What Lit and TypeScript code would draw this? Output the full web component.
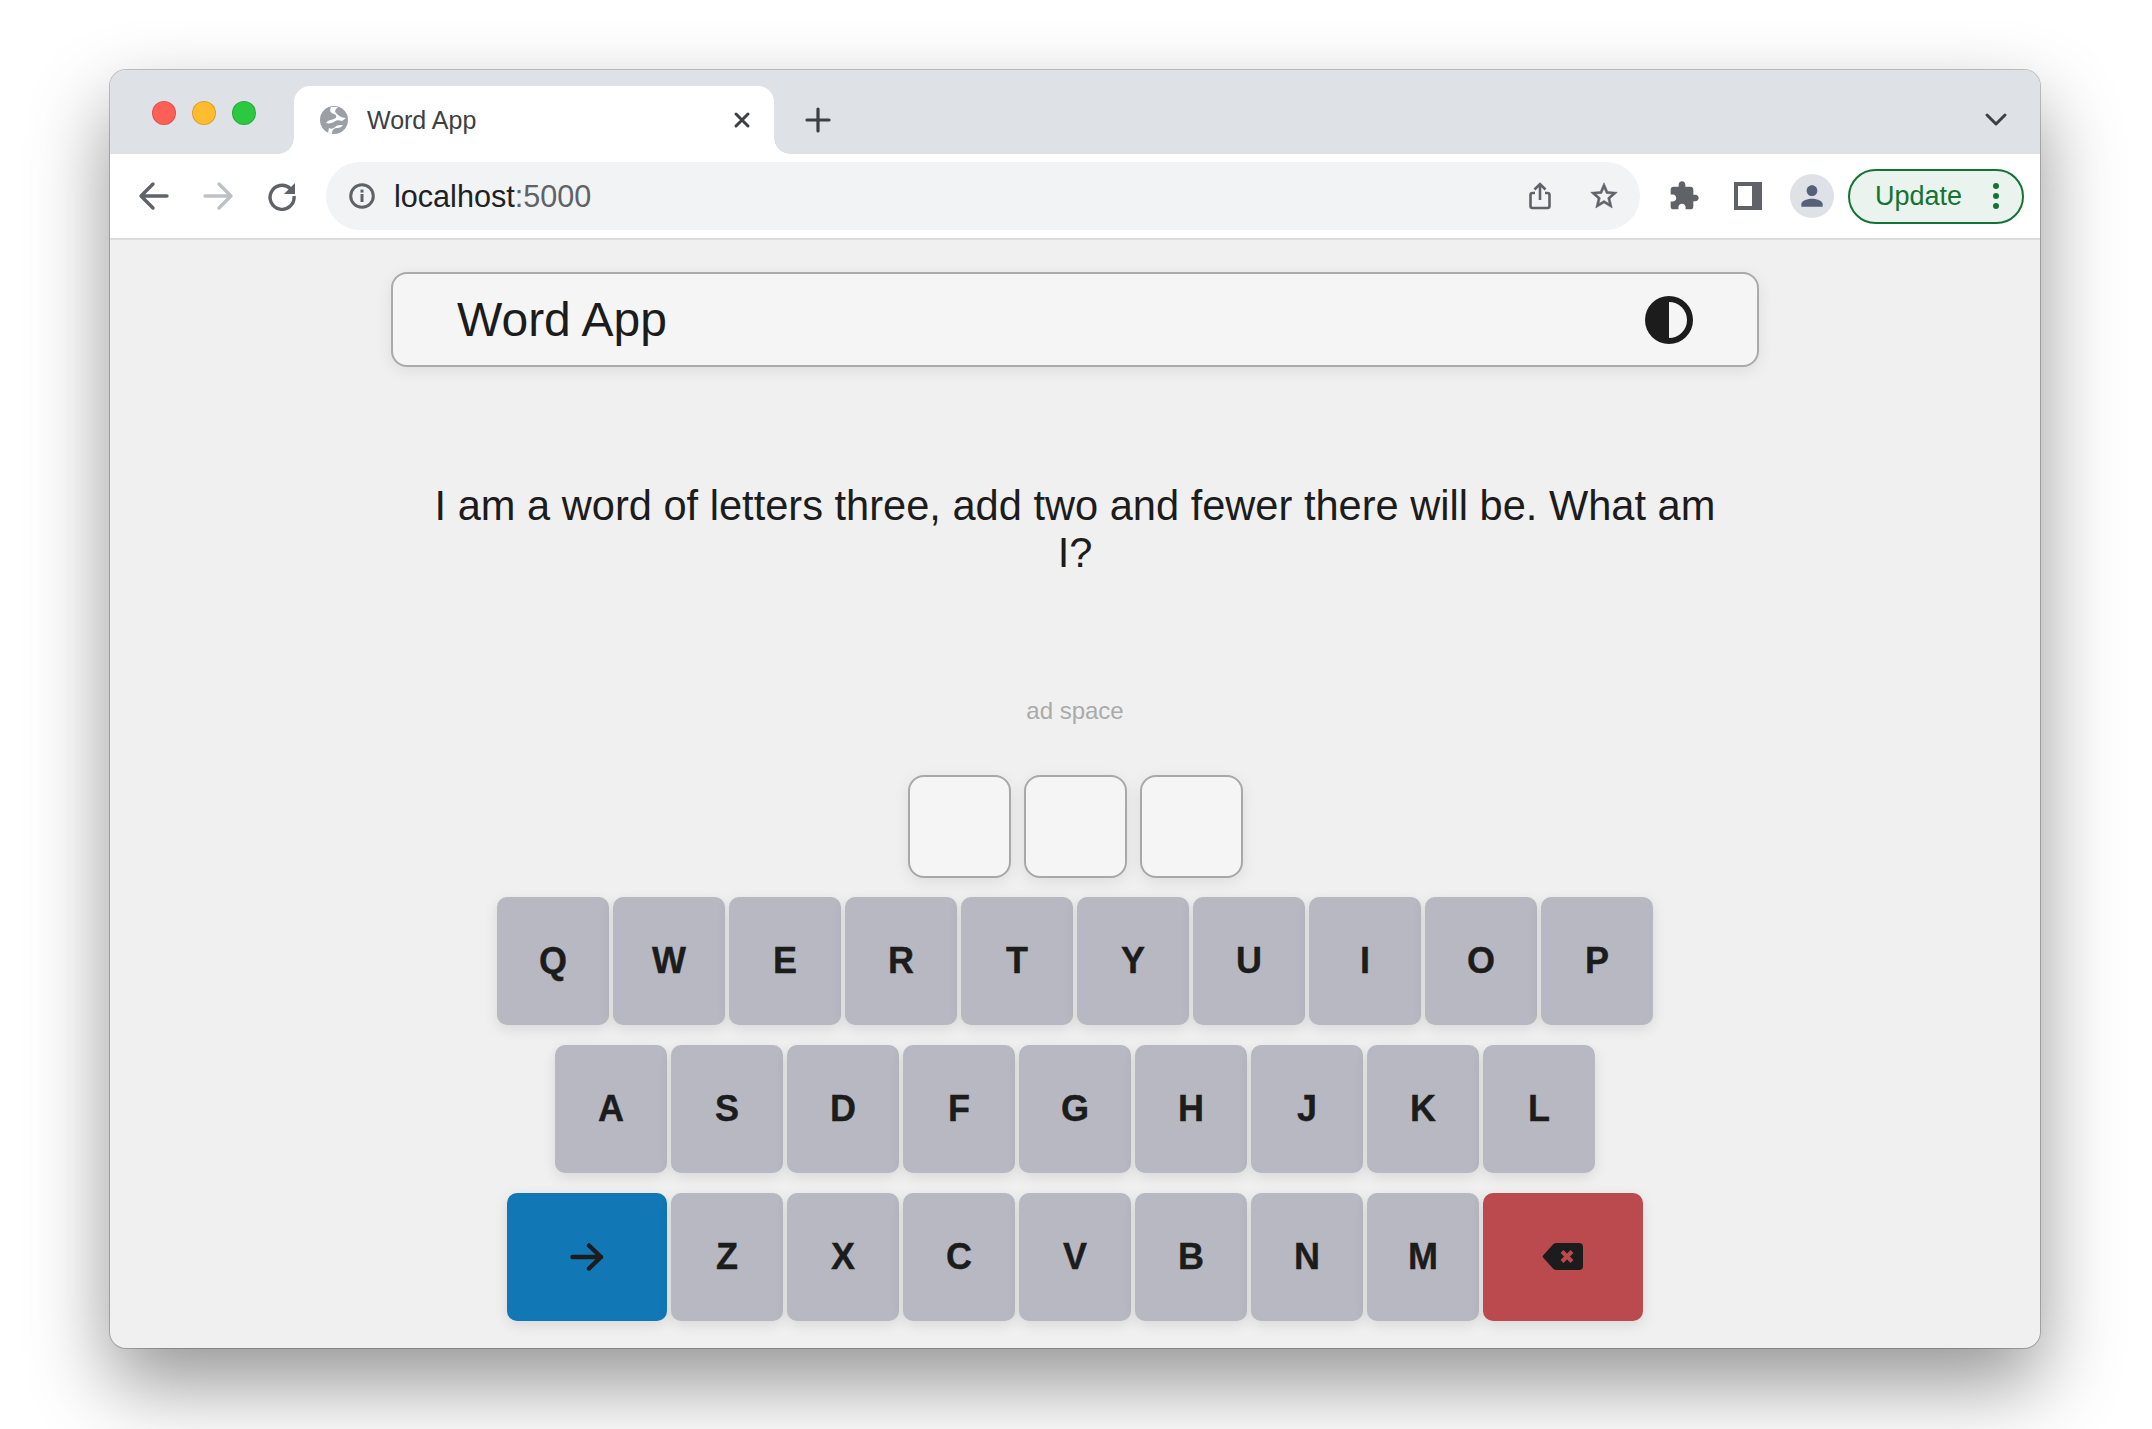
import { LitElement, css, html, svg } from "lit";
import { customElement } from "lit/decorators.js";

const ROWS = ["QWERTYUIOP", "ASDFGHJKL", "ZXCVBNM"];

@customElement("browser-chrome")
export class BrowserChrome extends LitElement {
  static styles = css`
    :host {
      display: block;
      font-family: "Liberation Sans", Arial, sans-serif;
    }
    svg {
      display: block;
      flex: none;
    }
    .strip {
      height: 84px;
      background: #dee1e6;
      display: flex;
      align-items: flex-start;
      border-radius: 16px 16px 0 0;
    }
    .lights {
      display: flex;
      gap: 16px;
      margin: 31px 0 0 42px;
    }
    .light {
      width: 24px;
      height: 24px;
      border-radius: 50%;
      box-sizing: border-box;
      border: 1px solid rgba(0, 0, 0, 0.14);
    }
    .red { background: #ff5f57; }
    .yellow { background: #febc2e; }
    .green { background: #2bc840; }
    .tab {
      position: relative;
      width: 480px;
      height: 68px;
      margin: 16px 0 0 38px;
      padding: 0 20px 0 26px;
      box-sizing: border-box;
      display: flex;
      align-items: center;
      gap: 19px;
      background: #fff;
      border-radius: 16px 16px 0 0;
    }
    .tab::before,
    .tab::after {
      content: "";
      position: absolute;
      bottom: 0;
      width: 16px;
      height: 16px;
    }
    .tab::before {
      left: -16px;
      background: radial-gradient(circle at 0 0, #dee1e6 15.5px, #fff 16px);
    }
    .tab::after {
      right: -16px;
      background: radial-gradient(circle at 100% 0, #dee1e6 15.5px, #fff 16px);
    }
    .tab-title {
      flex: 1;
      font-size: 25px;
      color: #3c4043;
    }
    .plus {
      margin: 36px 0 0 30px;
    }
    .chevron {
      margin: 38px 32px 0 auto;
    }
    .toolbar {
      height: 84px;
      background: #fff;
      border-bottom: 2px solid #dcdcdc;
      display: flex;
      align-items: center;
      padding-left: 28px;
    }
    .nav {
      margin-right: 32px;
    }
    .nav:nth-of-type(3) {
      margin-right: 28px;
    }
    .omnibox {
      width: 1314px;
      height: 68px;
      box-sizing: border-box;
      padding: 0 20px 0 23px;
      border-radius: 34px;
      background: #f1f3f4;
      display: flex;
      align-items: center;
    }
    .url {
      flex: 1;
      margin-left: 19px;
      font-size: 30.6px;
      color: #202124;
    }
    .url span {
      color: #5f6368;
    }
    .share {
      margin-right: 34px;
    }
    .puzzle {
      margin-left: 28px;
    }
    .panel {
      margin-left: 34px;
      width: 28px;
      height: 28px;
      box-sizing: border-box;
      background: #5f6368;
      padding: 4px 10px 4px 4px;
    }
    .panel div {
      height: 100%;
      background: #fff;
    }
    .avatar {
      margin-left: 28px;
      width: 44px;
      height: 44px;
      border-radius: 50%;
      background: #dee1e6;
      display: flex;
      align-items: center;
      justify-content: center;
    }
    .update {
      margin-left: 14px;
      width: 176px;
      height: 55px;
      box-sizing: border-box;
      padding: 0 23px 0 25px;
      border: 2px solid #137333;
      border-radius: 28px;
      background: #ebf3ee;
      color: #137333;
      font-size: 27px;
      display: flex;
      align-items: center;
      justify-content: space-between;
    }
    .dots {
      display: flex;
      flex-direction: column;
      gap: 4px;
    }
    .dots i {
      width: 6px;
      height: 6px;
      border-radius: 50%;
      background: #137333;
    }
  `;

  private icon(size: number, box: number, content: unknown, cls = "") {
    return html`<svg class=${cls} width=${size} height=${size} viewBox="0 0 ${box} ${box}">${content}</svg>`;
  }

  render() {
    return html`
      <div class="strip">
        <div class="lights">
          <div class="light red"></div>
          <div class="light yellow"></div>
          <div class="light green"></div>
        </div>
        <div class="tab">
          ${this.icon(28, 28, svg`
            <circle cx="14" cy="14" r="14" fill="#9aa0a6" />
            <path d="M11 1C9 5 11 7 14 8c3 1 3 4 0 5-3 1-6 1-8 4 3 1 6 0 8-1 2-2 5-2 8-1l4-3C21 12 18 9 16 7 14 5 16 3 18 1Z" fill="#fff" />
            <path d="M12 28c0-4 2-6 5-6 3 0 5-1 6-3-3 0-6 0-8 2-2 2-4 2-6 1l-1 5Z" fill="#fff" />
          `)}
          <div class="tab-title">Word App</div>
          ${this.icon(24, 24, svg`<path d="M6 6 18 18M18 6 6 18" stroke="#3c4043" stroke-width="3" stroke-linecap="round" />`)}
        </div>
        ${this.icon(28, 28, svg`<path d="M14 3V25M3 14H25" stroke="#3c4043" stroke-width="3.2" stroke-linecap="round" />`, "plus")}
        ${this.icon(24, 24, svg`<path d="M3 7 12 16 21 7" fill="none" stroke="#3c4043" stroke-width="3" stroke-linecap="round" stroke-linejoin="round" />`, "chevron")}
      </div>
      <div class="toolbar">
        ${this.icon(32, 32, svg`<path d="M29 16H4M15 4 3 16 15 28" fill="none" stroke="#5f6368" stroke-width="3.4" stroke-linecap="round" stroke-linejoin="round" />`, "nav")}
        ${this.icon(32, 32, svg`<path d="M3 16H28M17 4 29 16 17 28" fill="none" stroke="#bdc1c6" stroke-width="3.4" stroke-linecap="round" stroke-linejoin="round" />`, "nav")}
        ${this.icon(32, 32, svg`
          <path d="M24.2 8.5A12 12 0 1 0 28 16" fill="none" stroke="#5f6368" stroke-width="3.4" />
          <path d="M29 3V14H18Z" fill="#5f6368" />
        `, "nav")}
        <div class="omnibox">
          ${this.icon(26, 26, svg`
            <circle cx="13" cy="13" r="11.3" fill="none" stroke="#5f6368" stroke-width="3" />
            <rect x="11.5" y="11" width="3" height="8" fill="#5f6368" />
            <rect x="11.5" y="6.6" width="3" height="3" fill="#5f6368" />
          `)}
          <div class="url">localhost<span>:5000</span></div>
          ${this.icon(28, 28, svg`
            <path d="M9 11H6.5A2 2 0 0 0 4.5 13V24A2 2 0 0 0 6.5 26H21.5A2 2 0 0 0 23.500 24V13A2 2 0 0 0 21.5 11H19" fill="none" stroke="#5f6368" stroke-width="2.6" />
            <path d="M14 18V2.500M8.500 7.500 14 2 19.500 7.500" fill="none" stroke="#5f6368" stroke-width="2.6" />
          `, "share")}
          ${this.icon(32, 24, svg`<path d="M22 9.24l-7.190-.62L12 2 9.190 8.630 2 9.240l5.460 4.730L5.820 21 12 17.270 18.180 21l-1.630-7.030L22 9.240zM12 15.400l-3.760 2.270 1-4.280-3.320-2.880 4.380-.38L12 6.100l1.710 4.040 4.380.38-3.320 2.880 1 4.280L12 15.400z" fill="#5f6368" stroke="#5f6368" stroke-width="0.4" />`)}
        </div>
        ${this.icon(32, 24, svg`<path d="M20.500 11H19V7c0-1.100-.9-2-2-2h-4V3.500C13 2.120 11.880 1 10.500 1S8 2.120 8 3.500V5H4c-1.100 0-1.990.9-1.990 2v3.800H3.500c1.490 0 2.700 1.210 2.700 2.700s-1.210 2.700-2.700 2.700H2V20c0 1.100.9 2 2 2h3.800v-1.500c0-1.490 1.210-2.700 2.700-2.700 1.490 0 2.700 1.210 2.700 2.700V22H17c1.100 0 2-.9 2-2v-4h1.500c1.380 0 2.500-1.120 2.500-2.500S21.880 11 20.500 11z" fill="#5f6368" />`, "puzzle")}
        <div class="panel"><div></div></div>
        <div class="avatar">
          ${this.icon(32, 24, svg`<path d="M12 12c2.210 0 4-1.790 4-4s-1.790-4-4-4-4 1.790-4 4 1.790 4 4 4zm0 2c-2.670 0-8 1.340-8 4v2h16v-2c0-2.660-5.330-4-8-4z" fill="#566078" />`)}
        </div>
        <div class="update">
          <span>Update</span>
          <div class="dots"><i></i><i></i><i></i></div>
        </div>
      </div>
    `;
  }
}

@customElement("word-keyboard")
export class WordKeyboard extends LitElement {
  static styles = css`
    :host {
      display: flex;
      flex-direction: column;
      gap: 20px;
      margin-top: 19px;
    }
    .row {
      display: flex;
      justify-content: center;
      gap: 4px;
    }
    .key {
      width: 112px;
      height: 128px;
      border-radius: 10px;
      background: #b8b8c2;
      box-shadow: 0 4px 14px rgba(0, 0, 0, 0.1);
      display: flex;
      align-items: center;
      justify-content: center;
      font-size: 36px;
      font-weight: 700;
      color: #1c1c1c;
      -webkit-text-stroke: 0.4px #1c1c1c;
    }
    .wide {
      width: 160px;
    }
    .enter {
      background: #1177b5;
    }
    .back {
      background: #bb4a4f;
    }
  `;

  private keys(row: string) {
    return [...row].map((k) => html`<div class="key">${k}</div>`);
  }

  render() {
    return html`
      <div class="row">${this.keys(ROWS[0])}</div>
      <div class="row">${this.keys(ROWS[1])}</div>
      <div class="row">
        <div class="key wide enter">
          <svg width="34" height="28" viewBox="0 0 34 28">
            <path d="M2.500 14H31M19 2.500 31 14 19 25.500" fill="none" stroke="#1c1c1c" stroke-width="4.5" stroke-linecap="round" stroke-linejoin="round" />
          </svg>
        </div>
        ${this.keys(ROWS[2])}
        <div class="key wide back">
          <svg width="42" height="28" viewBox="0 0 42 28">
            <path d="M1.500 12 11 1.500A4 4 0 0 1 14 0H37A4 4 0 0 1 41 4V23A4 4 0 0 1 37 27H14A4 4 0 0 1 11 25.500L1.500 15A2 2 0 0 1 1.500 12Z" fill="#1c1c1c" />
            <path d="M20 8.500 30 18.500M30 8.500 20 18.500" stroke="#bb4a4f" stroke-width="4" />
          </svg>
        </div>
      </div>
    `;
  }
}

@customElement("app-root")
export class AppRoot extends LitElement {
  static styles = css`
    :host {
      display: block;
      height: 1429px;
      overflow: hidden;
      background: #fff;
      padding: 70px 112px 0 110px;
      box-sizing: border-box;
      font-family: "Liberation Sans", Arial, sans-serif;
      color: #1c1c1c;
    }
    .window {
      width: 1930px;
      height: 1278px;
      border-radius: 16px;
      display: flex;
      flex-direction: column;
      background: #f0f0f0;
      box-shadow: 0 0 0 1px rgba(0, 0, 0, 0.22), 0 36px 80px rgba(0, 0, 0, 0.42);
    }
    .content {
      flex: 1;
      display: flex;
      flex-direction: column;
      align-items: center;
      padding-top: 32px;
      border-radius: 0 0 16px 16px;
    }
    .navbar {
      width: 1368px;
      height: 95px;
      box-sizing: border-box;
      padding: 0 64px 0 64px;
      border: 2px solid #aaa;
      border-radius: 16px;
      background: #f5f5f5;
      box-shadow: 0 4px 16px rgba(0, 0, 0, 0.08);
      display: flex;
      align-items: center;
      justify-content: space-between;
      font-size: 48px;
    }
    .riddle {
      width: 1300px;
      margin: 115px 0 0;
      font-size: 41.6px;
      line-height: 47px;
      text-align: center;
    }
    .ad {
      margin-top: 121px;
      font-size: 24px;
      line-height: 28px;
      color: #aaa;
    }
    .tiles {
      display: flex;
      gap: 13px;
      margin-top: 50px;
    }
    .tile {
      width: 103px;
      height: 103px;
      box-sizing: border-box;
      border: 2px solid #a8a8a8;
      border-radius: 16px;
      background: #f5f5f5;
      box-shadow: 0 4px 16px rgba(0, 0, 0, 0.08);
    }
  `;

  render() {
    return html`
      <div class="window">
        <browser-chrome></browser-chrome>
        <div class="content">
          <div class="navbar">
            <span>Word App</span>
            <svg width="48" height="48" viewBox="0 0 48 48">
              <circle cx="24" cy="24" r="24" fill="#1c1c1c" />
              <path d="M24 6A18 18 0 0 1 24 42Z" fill="#f5f5f5" />
            </svg>
          </div>
          <p class="riddle">I am a word of letters three, add two and fewer there will be. What am I?</p>
          <div class="ad">ad space</div>
          <div class="tiles">
            <div class="tile"></div>
            <div class="tile"></div>
            <div class="tile"></div>
          </div>
          <word-keyboard></word-keyboard>
        </div>
      </div>
    `;
  }
}
